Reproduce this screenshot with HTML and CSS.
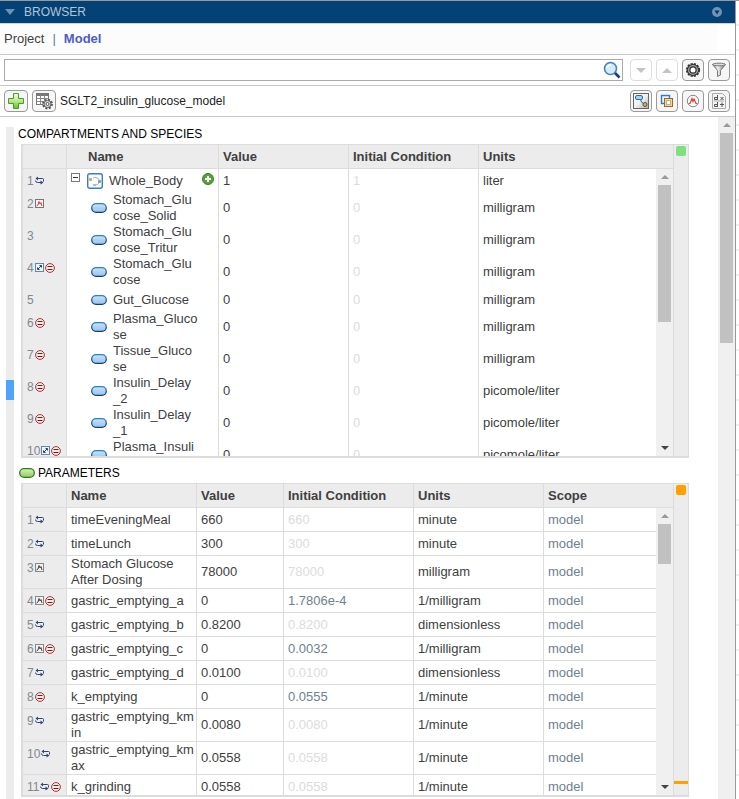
FILE: index.html
```html
<!DOCTYPE html>
<html lang="en">

<head>
    <meta charset="UTF-8">
    <title>Model Browser</title>
    <meta name="viewport" content="width=device-width, initial-scale=1">
    <link rel="stylesheet" href="styles.css">
</head>

<body>
    <svg class="defs" aria-hidden="true">
        <defs>
            <linearGradient id="blueFill" x1="0" y1="0" x2="0" y2="1">
                <stop offset="0" stop-color="#c3e4f6" />
                <stop offset="1" stop-color="#9dc0ea" />
            </linearGradient>
            <linearGradient id="blueEdge" x1="0" y1="0" x2="0" y2="1">
                <stop offset="0" stop-color="#2c82c9" />
                <stop offset="1" stop-color="#123f75" />
            </linearGradient>
            <linearGradient id="greenFill" x1="0" y1="0" x2="0" y2="1">
                <stop offset="0" stop-color="#d9f2c0" />
                <stop offset="1" stop-color="#8fca5c" />
            </linearGradient>
            <linearGradient id="plusFill" x1="0" y1="0" x2="0" y2="1">
                <stop offset="0" stop-color="#f4fce8" />
                <stop offset="0.5" stop-color="#b8e986" />
                <stop offset="1" stop-color="#5fc32c" />
            </linearGradient>
            <linearGradient id="diagramFill" x1="0" y1="0" x2="1" y2="1">
                <stop offset="0" stop-color="#fff" />
                <stop offset="0.5" stop-color="#f0f0f0" />
                <stop offset="1" stop-color="#aaa" />
            </linearGradient>
            <linearGradient id="metal" x1="0" y1="0" x2="1" y2="0">
                <stop offset="0" stop-color="#888" />
                <stop offset="0.4" stop-color="#f4f4f4" />
                <stop offset="1" stop-color="#666" />
            </linearGradient>
        </defs>
        <symbol id="i-repeat" viewBox="0 0 10 9">
            <path d="M2 2.500H7.500Q8.500 2.500 8.500 3.500V5.500M7 6.500H2.500Q.5 6.500.5 4.500" fill="none" stroke="#34466f" />
            <path d="M3 .5V4.500L.5 2.500ZM5.500 4.500V8.500L8.500 6.500Z" fill="#34466f" />
        </symbol>
        <symbol id="i-rule" viewBox="0 0 10 10">
            <circle cx="5" cy="5" r="4.400" fill="#fbeeee" stroke="#a8322f" />
            <path d="M2.500 3.500H7.500M2.500 6.500H7.500" stroke="#8c1111" />
        </symbol>
        <symbol id="i-dose-red" viewBox="0 0 9 9">
            <rect x=".5" y=".5" width="8" height="8" fill="#fdf3f3" stroke="#777" />
            <path d="M1.500 7L3 6 4 2.500 5 5 6 3.500 7 7" fill="none" stroke="#e23b3b" />
        </symbol>
        <symbol id="i-dose-gray" viewBox="0 0 9 9">
            <rect x=".5" y=".5" width="8" height="8" fill="#f1f1f1" stroke="#888" />
            <path d="M1.500 7L3 6 4 2.500 5 5 6 3.500 7 7" fill="none" stroke="#444" />
        </symbol>
        <symbol id="i-link" viewBox="0 0 9 9">
            <rect x=".5" y=".5" width="8" height="8" fill="#eef4fc" stroke="#6485b5" />
            <path d="M3 6L6 3M4.500 2.500H6.500V4.500M2.500 4.500V6.500H4.500" fill="none" stroke="#223f7a" />
        </symbol>
        <symbol id="i-species" viewBox="0 0 16 10">
            <rect x=".7" y=".7" width="14.600" height="8.600" rx="4.300" fill="url(#blueFill)" stroke="url(#blueEdge)" stroke-width="1.300" />
        </symbol>
        <symbol id="i-parameter" viewBox="0 0 16 10">
            <rect x=".7" y=".7" width="14.600" height="8.600" rx="4.300" fill="url(#greenFill)" stroke="#2f7d22" stroke-width="1.300" />
        </symbol>
        <symbol id="i-compartment" viewBox="0 0 16 16">
            <rect x=".7" y=".7" width="14.600" height="14.600" rx="2" fill="#f8fbff" stroke="#3c7fc0" stroke-width="1.400" />
            <path d="M6 5.500Q7 4 9 4.500Q12 5 12.500 8M12 10Q11 12 8 12" fill="none" stroke="#9db2c8" />
            <rect x="2" y="5" width="3" height="3" rx="1" fill="#d2ab54" />
            <rect x="11" y="7" width="3" height="3" rx="1" fill="#8f9a8a" />
            <rect x="6" y="11" width="3" height="2" fill="#a4bfda" />
        </symbol>
        <symbol id="i-add" viewBox="0 0 12 12">
            <circle cx="6" cy="6" r="5.500" fill="#56a33a" stroke="#3b7d28" />
            <path d="M6 3V9M3 6H9" stroke="#fff" stroke-width="2" />
        </symbol>
    </svg>

    <div class="panel">
        <header class="title-bar">
            <span class="title-arrow"></span>
            <h1>BROWSER</h1>
            <button class="title-menu" aria-label="Panel menu">
                <svg width="10" height="10" viewBox="0 0 10 10">
                    <circle cx="5" cy="5" r="5" fill="#6f93b4" />
                    <path d="M2.500 3.500H7.500L5 7.500Z" fill="#04376a" />
                </svg>
            </button>
        </header>

        <nav class="tabs">
            <a href="#project">Project</a>
            <span class="divider">|</span>
            <a class="active" href="#model">Model</a>
        </nav>

        <div class="bar search-bar">
            <div class="search">
                <input type="text" aria-label="Search">
                <svg width="18" height="18" viewBox="0 0 18 18">
                    <path d="M11.500 11.500L16.500 16.500" stroke="#173f73" stroke-width="2.600" />
                    <circle cx="7.500" cy="7.500" r="6" fill="#d4ebf9" stroke="#4384bb" stroke-width="1.600" />
                    <path d="M4 7Q4.500 4 8 3.700" fill="none" stroke="#fff" stroke-width="1.500" />
                </svg>
            </div>
            <div class="tools">
                <button class="tool disabled" aria-label="Next match" disabled>
                    <svg width="10" height="5" viewBox="0 0 10 5"><path d="M0 0H10L5 5Z" fill="#c4c4c4" /></svg>
                </button>
                <button class="tool disabled" aria-label="Previous match" disabled>
                    <svg width="10" height="5" viewBox="0 0 10 5"><path d="M0 5H10L5 0Z" fill="#c4c4c4" /></svg>
                </button>
                <button class="tool" aria-label="Settings">
                    <svg width="16" height="16" viewBox="0 0 16 16">
                        <circle cx="8" cy="8" r="6.200" fill="none" stroke="#333" stroke-width="1.800" stroke-dasharray="2.200 1.050" />
                        <circle cx="8" cy="8" r="4.300" fill="#fff" stroke="#333" stroke-width="3.600" />
                        <circle cx="8" cy="8" r="4.400" fill="none" stroke="#a0a0a0" stroke-width="1.400" />
                    </svg>
                </button>
                <button class="tool" aria-label="Filter">
                    <svg width="16" height="16" viewBox="0 0 16 16">
                        <path d="M1.500 2.500L6.500 8.500V14.500L9.500 13V8.500L14.500 2.500Z" fill="url(#metal)" stroke="#777" />
                        <ellipse cx="8" cy="2.500" rx="6.500" ry="1.300" fill="#ddd" stroke="#777" />
                    </svg>
                </button>
            </div>
        </div>

        <div class="bar model-bar">
            <button class="tool" aria-label="Add">
                <svg width="16" height="16" viewBox="0 0 16 16">
                    <path d="M5.500.5H10.500V5.500H15.500V10.500H10.500V15.500H5.500V10.500H.5V5.500H5.500Z" fill="url(#plusFill)" stroke="#4c9a2d" />
                </svg>
            </button>
            <button class="tool" aria-label="Table options">
                <svg width="18" height="18" viewBox="0 0 18 18">
                    <rect x="1.500" y="1.500" width="12" height="11" fill="#fff" stroke="#777" />
                    <path d="M1.500 3H13.500" stroke="#777" stroke-width="2" />
                    <path d="M1.500 6.500H13.500M1.500 9.500H13.500M5.500 3V12.500M9.500 3V12.500" stroke="#888" />
                    <circle cx="12.500" cy="12" r="4.500" fill="#fff" stroke="#555" stroke-width="1.800" stroke-dasharray="2 1.530" />
                    <circle cx="12.500" cy="12" r="3.600" fill="#ddd" stroke="#555" />
                    <circle cx="12.500" cy="12" r="1.500" fill="#fff" stroke="#555" />
                </svg>
            </button>
            <span class="model-name">SGLT2_insulin_glucose_model</span>
            <div class="tools">
                <button class="tool" aria-label="Diagram">
                    <svg width="18" height="18" viewBox="0 0 18 18">
                        <rect x="1.500" y="1.500" width="15" height="15" fill="url(#diagramFill)" stroke="#666" />
                        <rect x="3.500" y="3.500" width="7" height="4" rx="1.500" fill="#a9d3f1" stroke="#2d6da8" />
                        <path d="M9 8V9.500L12 12" fill="none" stroke="#245b94" />
                        <circle cx="13" cy="12.500" r="2" fill="#eda82f" stroke="#555" />
                    </svg>
                </button>
                <button class="tool" aria-label="Copies">
                    <svg width="14" height="14" viewBox="0 0 14 14">
                        <rect x="1.500" y="1.500" width="8" height="8" fill="#e5f2fb" stroke="#347db8" stroke-width="1.400" />
                        <rect x="4.500" y="4.500" width="8" height="8" fill="#ecd9ab" stroke="#9a682c" />
                        <rect x="6.500" y="6.500" width="4" height="4" fill="#fff" stroke="#d0b070" />
                    </svg>
                </button>
                <button class="tool" aria-label="Doses">
                    <svg width="14" height="14" viewBox="0 0 14 14">
                        <circle cx="7" cy="7" r="5.700" fill="#fff" stroke="#888" />
                        <path d="M2.500 9.500H4L6 4.500 7 7.500 8 5 10 9.500H11.500" fill="none" stroke="#e33c3c" stroke-width="1.200" />
                    </svg>
                </button>
                <button class="tool" aria-label="Equations">
                    <svg width="14" height="16" viewBox="0 0 14 16">
                        <path d="M.5.5H10.500L13.500 3.500V15.500H.5Z" fill="#f4f4f4" stroke="#aaa" />
                        <path d="M5.500 2V7M5 4.500H2.500V6.500H5M8.500 4L11.500 7M11.500 4L8.500 7M5.500 9V14M5 11.500H2.500V13.500H5M10 9.500V14M8 11.500H12" fill="none" stroke="#555" />
                        <path d="M2 8H12" stroke="#aaa" />
                    </svg>
                </button>
            </div>
        </div>

        <main class="workspace">
            <div class="side-rail"><div class="side-marker"></div></div>
            <div class="sections">
                <section>
                    <h2>COMPARTMENTS AND SPECIES</h2>
                    <div class="grid">
                        <div class="grid-main">
                            <table class="species">
                                <thead>
                                    <tr>
                                        <th class="gutter"></th>
                                        <th class="col-name">Name</th>
                                        <th class="col-value">Value</th>
                                        <th class="col-initial">Initial Condition</th>
                                        <th>Units</th>
                                    </tr>
                                </thead>
                                <tbody id="speciesRows"></tbody>
                            </table>
                            <div class="scrollbar grid-scroll">
                                <span class="up"></span>
                                <div class="track"><div class="thumb thumb-species"></div></div>
                                <span class="down"></span>
                            </div>
                        </div>
                        <div class="status-rail"><div class="status ok"></div></div>
                    </div>
                </section>
                <section>
                    <h2><svg width="16" height="10"><use href="#i-parameter" /></svg>PARAMETERS</h2>
                    <div class="grid">
                        <div class="grid-main">
                            <table class="parameters">
                                <thead>
                                    <tr>
                                        <th class="gutter"></th>
                                        <th class="col-name">Name</th>
                                        <th class="col-value">Value</th>
                                        <th class="col-initial">Initial Condition</th>
                                        <th class="col-units">Units</th>
                                        <th>Scope</th>
                                    </tr>
                                </thead>
                                <tbody id="parameterRows"></tbody>
                            </table>
                            <div class="scrollbar grid-scroll">
                                <span class="up"></span>
                                <div class="track"><div class="thumb thumb-parameters"></div></div>
                                <span class="down"></span>
                            </div>
                        </div>
                        <div class="status-rail">
                            <div class="status warning"></div>
                            <div class="warning-mark"></div>
                        </div>
                    </div>
                </section>
            </div>
            <div class="scrollbar">
                <span class="up"></span>
                <div class="track"><div class="thumb thumb-page"></div></div>
            </div>
        </main>
    </div>
    <div class="next-panel"></div>

    <script>
        const sizes = {
            'repeat': [10, 9],
            'rule': [10, 10],
            'dose-red': [9, 9],
            'dose-gray': [9, 9],
            'link': [9, 9],
            'species': [16, 10],
            'compartment': [16, 16],
            'add': [12, 12]
        };

        // name, units, gutter icons
        const species = [
            ['Stomach_Glu<br>cose_Solid', 'milligram', ['dose-red']],
            ['Stomach_Glu<br>cose_Tritur', 'milligram', []],
            ['Stomach_Glu<br>cose', 'milligram', ['link', 'rule']],
            ['Gut_Glucose', 'milligram', []],
            ['Plasma_Gluco<br>se', 'milligram', ['rule']],
            ['Tissue_Gluco<br>se', 'milligram', ['rule']],
            ['Insulin_Delay<br>_2', 'picomole/liter', ['rule']],
            ['Insulin_Delay<br>_1', 'picomole/liter', ['rule']],
            ['Plasma_Insuli<br>n', 'picomole/liter', ['link', 'rule']]
        ];

        // name, value, initial condition, units, gutter icons
        const parameters = [
            ['timeEveningMeal', '660', '660', 'minute', ['repeat']],
            ['timeLunch', '300', '300', 'minute', ['repeat']],
            ['Stomach Glucose After Dosing', '78000', '78000', 'milligram', ['dose-gray']],
            ['gastric_emptying_a', '0', '1.7806e-4', '1/milligram', ['dose-gray', 'rule']],
            ['gastric_emptying_b', '0.8200', '0.8200', 'dimensionless', ['repeat']],
            ['gastric_emptying_c', '0', '0.0032', '1/milligram', ['dose-gray', 'rule']],
            ['gastric_emptying_d', '0.0100', '0.0100', 'dimensionless', ['repeat']],
            ['k_emptying', '0', '0.0555', '1/minute', ['rule']],
            ['gastric_emptying_km<wbr>in', '0.0080', '0.0080', '1/minute', ['repeat']],
            ['gastric_emptying_km<wbr>ax', '0.0558', '0.0558', '1/minute', ['repeat']],
            ['k_grinding', '0.0558', '0.0558', '1/minute', ['repeat', 'rule']]
        ];

        function icon(name) {
            const [w, h] = sizes[name];
            return `<svg width="${w}" height="${h}"><use href="#i-${name}" /></svg>`;
        }

        function gutter(number, icons) {
            return `<td class="gutter"><div class="marks">${number}${icons.map(icon).join('')}</div></td>`;
        }

        let html = `<tr>
            ${gutter(1, ['repeat'])}
            <td><div class="node root">
                <button class="toggle" aria-label="Collapse"></button>
                ${icon('compartment')}<span>Whole_Body</span>
                <button class="add" aria-label="Add species">${icon('add')}</button>
            </div></td>
            <td>1</td><td class="faded">1</td><td>liter</td>
        </tr>`;
        species.forEach(([name, units, icons], i) => {
            html += `<tr>${gutter(i + 2, icons)}
                <td><div class="node">${icon('species')}<span>${name}</span></div></td>
                <td>0</td><td class="faded">0</td><td>${units}</td></tr>`;
        });
        document.getElementById('speciesRows').innerHTML = html;

        document.getElementById('parameterRows').innerHTML = parameters.map(([name, value, initial, units, icons], i) => {
            const initialClass = value === initial ? 'faded' : 'computed';
            return `<tr>${gutter(i + 1, icons)}
                <td>${name}</td><td>${value}</td><td class="${initialClass}">${initial}</td>
                <td>${units}</td><td class="computed">model</td></tr>`;
        }).join('');
    </script>
</body>

</html>
```

FILE: styles.css
```css
* {
    box-sizing: border-box;
}

body {
    margin: 0;
    height: 100vh;
    display: flex;
    overflow: hidden;
    border-top: 1px solid #999;
    background-color: #fff;
    color: #404040;
    font: 13px/16px "Liberation Sans", Arial, sans-serif;
}

svg {
    display: block;
    flex: none;
}

button {
    padding: 0;
    border: 0;
    background: none;
}

.defs {
    position: absolute;
    width: 0;
    height: 0;
}

.panel {
    flex: 1;
    min-width: 0;
    display: flex;
    flex-direction: column;
    border-right: 1px solid #999;
}

.next-panel {
    width: 3px;
    background: repeating-linear-gradient(#fff 0 23px, #f0f0f0 23px 25px);
}

.title-bar {
    display: flex;
    align-items: center;
    height: 23px;
    padding: 0 13px 0 5px;
    border-bottom: 1px solid #ccd3da;
    background-color: #044174;
}

.title-bar h1 {
    flex: 1;
    margin: 0 0 0 9px;
    color: #b1c5d8;
    font-size: 12px;
    font-weight: normal;
}

.title-arrow {
    border: 5px solid transparent;
    border-top: 6px solid #6793b8;
    border-bottom: 0;
}

.tabs {
    display: flex;
    align-items: center;
    gap: 8px;
    height: 30px;
    padding-left: 4px;
    margin-right: 18px;
    background-color: #fcfcfc;
}

.tabs a {
    color: #404040;
    text-decoration: none;
}

.tabs .active {
    color: #4b5cc4;
    font-weight: bold;
}

.divider {
    color: #5d8295;
}

.bar {
    display: flex;
    align-items: center;
    gap: 4px;
    height: 31px;
    padding: 0 5px 0 4px;
    border-top: 1px solid #c8c8c8;
}

.model-bar {
    height: 32px;
    border-bottom: 1px solid #c8c8c8;
}

.search {
    flex: 1;
    display: flex;
    align-items: center;
    height: 22px;
    margin-right: 3px;
    padding-right: 1px;
    border: 1px solid #aaa;
}

.search input {
    flex: 1;
    min-width: 0;
    height: 20px;
    border: 0;
    outline: 0;
}

.tools {
    display: flex;
    gap: 4px;
}

.tool {
    display: flex;
    align-items: center;
    justify-content: center;
    width: 22px;
    height: 22px;
    border: 1px solid #999;
    border-radius: 4px;
    background-color: #f6f6f6;
}

.tool.disabled {
    border-color: #ddd;
    background-color: #fff;
}

.model-bar > .tool {
    width: 24px;
}

.model-name {
    flex: 1;
    font-size: 12px;
    color: #222;
}

.workspace {
    flex: 1;
    min-height: 0;
    display: flex;
}

.side-rail {
    width: 8px;
    margin: 10px 0 0 6px;
    padding-top: 253px;
    background-color: #ececec;
}

.side-marker {
    height: 20px;
    background-color: #4fa3ff;
}

.sections {
    flex: 1;
    min-width: 0;
    padding: 8px 29px 0 7px;
}

h2 {
    display: flex;
    align-items: center;
    gap: 3px;
    height: 17px;
    margin: 0 0 2px -3px;
    color: #000;
    font-size: 12px;
    font-weight: normal;
}

h2 svg {
    margin-left: 1px;
}

section + section {
    padding-top: 6px;
}

.grid {
    display: flex;
    height: 314px;
    border: 1px solid #dcdcdc;
    border-left-width: 2px;
    border-bottom-width: 2px;
}

.grid-main {
    position: relative;
    flex: 1;
    min-width: 0;
    overflow: hidden;
}

table {
    width: 100%;
    table-layout: fixed;
    border-collapse: separate;
    border-spacing: 0;
}

th,
td {
    height: 23px;
    padding: 0 4px;
    border-right: 1px solid #dcdcdc;
    text-align: left;
}

th {
    height: 24px;
    border-bottom: 1px solid #dcdcdc;
    background-color: #ececec;
}

th:last-child,
td:last-child {
    border-right: 0;
}

.gutter {
    width: 44px;
    background-color: #ececec;
    vertical-align: top;
}

.marks {
    display: flex;
    align-items: center;
    gap: 1px;
    height: 23px;
    color: #808890;
    font-size: 12px;
}

.species .col-name {
    width: 152px;
    padding-left: 21px;
}

.species .col-value,
.col-initial,
.col-units,
.parameters .col-name {
    width: 130px;
}

.parameters .col-value {
    width: 87px;
}

.parameters td {
    height: 24px;
    padding-right: 0;
    border-bottom: 1px solid #dcdcdc;
}

.faded {
    color: #dcdcdc;
}

.computed {
    color: #708090;
}

.node {
    display: flex;
    align-items: center;
    gap: 6px;
    padding-left: 20px;
}

.node.root {
    padding-left: 0;
}

.toggle {
    width: 9px;
    height: 9px;
    margin-right: 1px;
    align-self: flex-start;
    border: 1px solid #777;
    background: linear-gradient(#333, #333) center / 5px 1px no-repeat #fff;
}

.add {
    margin-left: auto;
    align-self: flex-start;
}

.scrollbar {
    display: flex;
    flex-direction: column;
    align-items: center;
    width: 17px;
    background-color: #f0f0f0;
}

.grid-scroll {
    position: absolute;
    top: 24px;
    right: 0;
    bottom: 0;
}

.up,
.down {
    height: 16px;
    padding-top: 6px;
}

.up::before,
.down::before {
    content: "";
    display: block;
    border: 4px solid transparent;
    border-top: 0;
    border-bottom-color: #999;
}

.down::before {
    border-top: 4px solid #444;
    border-bottom: 0;
}

.track {
    flex: 1;
}

.thumb {
    width: 13px;
    background-color: #c1c1c1;
}

.thumb-species {
    height: 137px;
}

.thumb-parameters {
    height: 40px;
}

.thumb-page {
    height: 210px;
}

.status-rail {
    display: flex;
    flex-direction: column;
    justify-content: space-between;
    width: 15px;
    padding: 1px 0 11px;
    border-left: 1px solid #dcdcdc;
    background-color: #ececec;
}

.status {
    width: 10px;
    height: 10px;
    margin-left: 2px;
    border-radius: 2px;
}

.ok {
    background-color: #80e080;
}

.warning {
    background-color: #ffa000;
}

.warning-mark {
    height: 3px;
    background-color: #ffa000;
}
```
